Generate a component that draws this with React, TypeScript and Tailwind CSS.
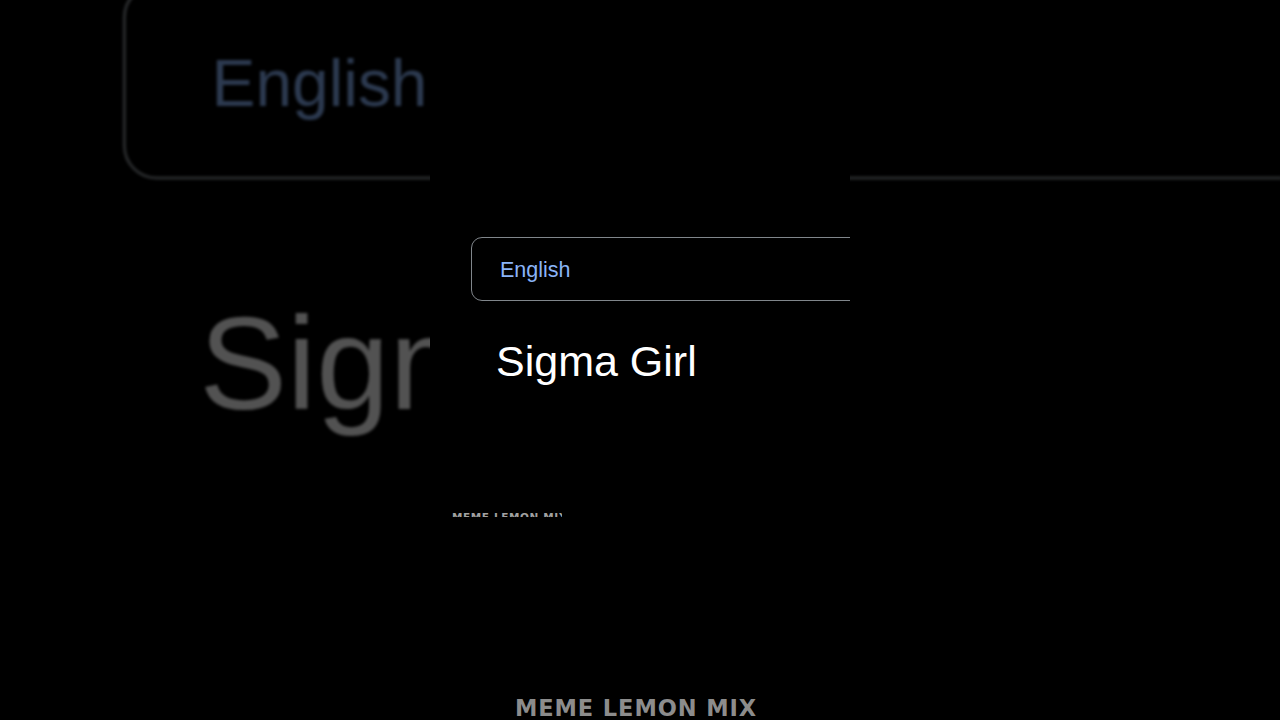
import React from "react";

// One frame of the short: the centred column is the real content; behind it the
// same column is blown up, dimmed and softened to fill the wide frame.
function Column({ backdrop }: { backdrop?: boolean }) {
  return (
    <div
      className={
        backdrop
          ? "ml-[430px] flex h-[720px] w-[420px] flex-col overflow-hidden"
          : "relative z-10 ml-[430px] flex h-[720px] w-[420px] flex-col overflow-hidden bg-black"
      }
      style={{ fontFamily: '"Liberation Sans", Arial, sans-serif' }}
    >
      <div className="mt-[237px] ml-[41px] flex h-[64px] w-[420px] shrink-0 items-center rounded-[11px] border border-[#80868b] pt-[3px] pl-[28px]">
        <span className="text-[21.5px] leading-none text-[#8ab4f8]">English</span>
      </div>
      <p className="mt-[39px] ml-[66px] text-[43px] leading-none text-white">
        Sigma Girl
      </p>
      <div className="mt-[130px] ml-[22px] h-[4px] w-[110px] shrink-0 overflow-hidden">
        <p
          className="-mt-[1px] text-[10.5px] leading-none font-bold tracking-[0.6px] whitespace-nowrap text-[#a0a0a0]"
          style={{ fontFamily: '"DejaVu Sans", sans-serif' }}
        >
          MEME LEMON MIX
        </p>
      </div>
      <p
        className="mt-auto mb-[1px] -ml-[8px] text-center text-[22.5px] leading-none font-bold tracking-[0.9px] text-[#8c8c8c]"
        style={{ fontFamily: '"DejaVu Sans", sans-serif' }}
      >
        MEME LEMON MIX
      </p>
    </div>
  );
}

export default function App() {
  return (
    <div className="relative h-[720px] w-[1280px] overflow-hidden bg-black">
      <div className="absolute inset-0 scale-[3.06] opacity-[0.32] blur-[0.6px]">
        <Column backdrop />
      </div>
      <Column />
    </div>
  );
}
